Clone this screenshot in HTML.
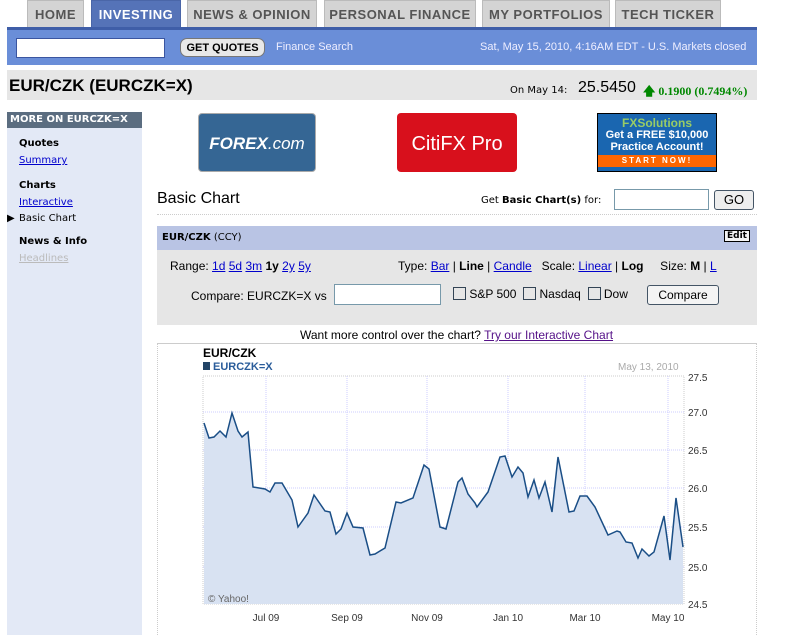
<!DOCTYPE html>
<html><head><style>
body{margin:0;width:810px;height:635px;background:#fff;font-family:"Liberation Sans",sans-serif;position:relative;overflow:hidden}
.a{position:absolute}
.tab{position:absolute;top:0;height:27px;background:#d4d4d4;border:1px solid #bbb;border-bottom:none;color:#555;font-weight:bold;font-size:13px;letter-spacing:0.5px;line-height:27px;text-align:center;box-sizing:border-box}
a{color:#00c;text-decoration:underline}
.v{font-family:"DejaVu Sans",sans-serif}
.sb div{position:absolute;left:19px;font-size:10px;white-space:nowrap}
</style></head><body>
<div class="tab" style="left:27px;width:57px">HOME</div>
<div class="tab" style="left:91px;width:90px;background:#5573b8;color:#fff;border-color:#4a66a8">INVESTING</div>
<div class="tab" style="left:187px;width:130px">NEWS &amp; OPINION</div>
<div class="tab" style="left:324px;width:152px">PERSONAL FINANCE</div>
<div class="tab" style="left:482px;width:128px">MY PORTFOLIOS</div>
<div class="tab" style="left:615px;width:106px">TECH TICKER</div>
<div class="a" style="left:7px;top:27px;width:750px;height:38px;background:#6a8ed8;border-top:3px solid #3f5ea8;box-sizing:border-box"></div>
<div class="a" style="left:16px;top:38px;width:149px;height:20px;background:#fff;border:1px solid #3a55a0;box-sizing:border-box"></div>
<div class="a" style="left:180px;top:38px;width:85px;height:19px;background:#e8e8e8;border:1px solid #777;border-radius:7px;font-size:11px;font-weight:bold;line-height:18px;text-align:center;box-sizing:border-box">GET QUOTES</div>
<div class="a" style="left:276px;top:41px;color:#eef;font-size:11px">Finance Search</div>
<div class="a" style="left:480px;top:41px;color:#eef;font-size:11px">Sat, May 15, 2010, 4:16AM EDT - U.S. Markets closed</div>
<div class="a" style="left:7px;top:70px;width:750px;height:30px;background:#e6e6e6"></div>
<div class="a" style="left:9px;top:76px;font-size:17px;font-weight:bold">EUR/CZK (EURCZK=X)</div>
<div class="a v" style="left:510px;top:85px;font-size:10px">On May 14:</div>
<div class="a" style="left:578px;top:79px;font-size:16px">25.5450</div>
<div class="a" style="left:643px;top:82px;font-size:12px;font-weight:bold;color:#080;font-family:'Liberation Serif',serif">&#129093; 0.1900 (0.7494%)</div>
<div class="a" style="left:7px;top:112px;width:135px;height:523px;background:#e3e9f6"></div>
<div class="a v" style="left:7px;top:112px;width:135px;height:16px;background:#5b6d80;color:#fff;font-size:10px;font-weight:bold;line-height:16px;padding-left:3px;box-sizing:border-box">MORE ON EURCZK=X</div>
<div class="sb v">
<div style="top:138px;font-weight:bold">Quotes</div>
<div style="top:155px"><a href="#">Summary</a></div>
<div style="top:180px;font-weight:bold">Charts</div>
<div style="top:197px"><a href="#">Interactive</a></div>
<div style="top:213px"><span style="position:absolute;left:-12px">&#9654;</span>Basic Chart</div>
<div style="top:236px;font-weight:bold">News &amp; Info</div>
<div style="top:253px;color:#bbb;text-decoration:underline">Headlines</div>
</div>
<div class="a" style="left:198px;top:113px;width:118px;height:59px;background:#356694;border:1px solid #aaa;border-radius:4px;color:#fff;font-style:italic;font-weight:bold;font-size:17px;line-height:59px;text-align:center;box-sizing:border-box">FOREX<span style="font-weight:normal">.com</span></div>
<div class="a" style="left:397px;top:113px;width:120px;height:59px;background:#d8101c;border-radius:4px;color:#fff;font-size:20px;line-height:62px;text-align:center">CitiFX Pro</div>
<div class="a" style="left:597px;top:113px;width:120px;height:59px;background:#1a66b0;border:1px solid #000;box-sizing:border-box;color:#fff;font-weight:bold;font-size:11px;text-align:center;line-height:12px">
<div style="color:#9c6;font-size:12px;margin-top:3px">FXSolutions</div>Get a FREE $10,000<br>Practice Account!
<div style="background:#f60;font-size:8px;margin-top:2px;letter-spacing:2px">START NOW!</div></div>
<div class="a" style="left:157px;top:190px;font-size:16px">Basic Chart</div>
<div class="a v" style="left:481px;top:195px;font-size:10px">Get <b>Basic Chart(s)</b> for:</div>
<div class="a" style="left:614px;top:189px;width:95px;height:21px;border:1px solid #79a;box-sizing:border-box"></div>
<div class="a" style="left:714px;top:190px;width:40px;height:20px;border:1px solid #456;border-radius:3px;background:#eee;box-sizing:border-box;text-align:center;font-size:13px;line-height:18px">GO</div>
<div class="a" style="left:157px;top:214px;width:600px;border-top:1px dotted #ccc"></div>
<div class="a" style="left:157px;top:226px;width:600px;height:24px;background:#b9c4e4"></div>
<div class="a v" style="left:162px;top:232px;font-size:10px"><b>EUR/CZK</b> (CCY)</div>
<div class="a v" style="left:724px;top:230px;font-size:9px;font-weight:bold;border:1px solid #000;background:#f4f4f4;padding:0 2px">Edit</div>
<div class="a" style="left:157px;top:250px;width:600px;height:75px;background:#e6e6e6"></div>
<div class="a" style="left:170px;top:259px;font-size:12px">Range: <a href="#">1d</a> <a href="#">5d</a> <a href="#">3m</a> <b>1y</b> <a href="#">2y</a> <a href="#">5y</a></div>
<div class="a" style="left:398px;top:259px;font-size:12px">Type: <a href="#">Bar</a> | <b>Line</b> | <a href="#">Candle</a> &nbsp; Scale: <a href="#">Linear</a> | <b>Log</b> &nbsp; &nbsp; Size: <b>M</b> | <a href="#">L</a></div>
<div class="a" style="left:191px;top:289px;font-size:12px">Compare: EURCZK=X vs</div>
<div class="a" style="left:334px;top:284px;width:107px;height:21px;background:#fff;border:1px solid #79a;box-sizing:border-box"></div>
<div class="a" style="left:453px;top:287px;font-size:12px"><span style="display:inline-block;width:11px;height:11px;border:1px solid #345;vertical-align:-2px"></span> S&amp;P 500 &nbsp;<span style="display:inline-block;width:11px;height:11px;border:1px solid #345;vertical-align:-2px"></span> Nasdaq &nbsp;<span style="display:inline-block;width:11px;height:11px;border:1px solid #345;vertical-align:-2px"></span> Dow</div>
<div class="a" style="left:647px;top:285px;width:72px;height:20px;border:1px solid #456;border-radius:3px;background:#f4f4f4;box-sizing:border-box;font-size:12px;text-align:center;line-height:18px">Compare</div>
<div class="a" style="left:300px;top:328px;font-size:12px">Want more control over the chart? <a href="#" style="color:#518">Try our Interactive Chart</a></div>
<div class="a" style="left:157px;top:343px;width:600px;height:292px;border-left:1px dotted #ccc;border-right:1px dotted #ccc;border-top:1px solid #ccc;box-sizing:border-box"></div>
<svg class="a" style="left:0;top:0" width="810" height="635">
<g font-family="Liberation Sans,sans-serif">
<text x="203" y="357" font-size="12" font-weight="bold">EUR/CZK</text>
<rect x="203" y="362" width="7" height="8" fill="#246"/>
<text x="213" y="370" font-size="11" font-weight="bold" fill="#2a5c9a">EURCZK=X</text>
<text x="618" y="370" font-size="10" fill="#aaa">May 13, 2010</text>
<rect x="203" y="376" width="481" height="228" fill="none" stroke="#ccc" stroke-dasharray="1,1"/>
<g stroke="#ccf" stroke-dasharray="1,1"><line x1="203" y1="412" x2="684" y2="412"/><line x1="203" y1="450" x2="684" y2="450"/><line x1="203" y1="488" x2="684" y2="488"/><line x1="203" y1="527" x2="684" y2="527"/><line x1="203" y1="567" x2="684" y2="567"/>
<line x1="266" y1="376" x2="266" y2="604"/><line x1="347" y1="376" x2="347" y2="604"/><line x1="427" y1="376" x2="427" y2="604"/><line x1="508" y1="376" x2="508" y2="604"/><line x1="585" y1="376" x2="585" y2="604"/><line x1="668" y1="376" x2="668" y2="604"/></g>
<path d="M204,423L209,438L214,437L220,431L226,437L232,413L238,431L242,437L248,432L253,487L265,489L270,492L275,483L282,483L292,500L298,527L308,513L314,495L325,511L330,512L336,534L341,529L347,513L353,527L363,528L370,555L375,554L385,548L396,502L401,503L413,498L424,465L429,469L440,527L446,529L458,482L462,478L468,494L475,503L477,507L488,492L500,457L505,456L512,477L518,467L523,473L528,497L534,480L539,498L545,482L552,512L558,457L569,512L574,511L580,496L587,496L595,507L608,535L617,531L620,532L626,542L632,543L638,558L642,549L649,556L654,552L664,516L670,560L676,498L683,547L683,604L204,604Z" fill="#d8e2f2" stroke="none"/>
<path d="M204,423L209,438L214,437L220,431L226,437L232,413L238,431L242,437L248,432L253,487L265,489L270,492L275,483L282,483L292,500L298,527L308,513L314,495L325,511L330,512L336,534L341,529L347,513L353,527L363,528L370,555L375,554L385,548L396,502L401,503L413,498L424,465L429,469L440,527L446,529L458,482L462,478L468,494L475,503L477,507L488,492L500,457L505,456L512,477L518,467L523,473L528,497L534,480L539,498L545,482L552,512L558,457L569,512L574,511L580,496L587,496L595,507L608,535L617,531L620,532L626,542L632,543L638,558L642,549L649,556L654,552L664,516L670,560L676,498L683,547" fill="none" stroke="#1a4e86" stroke-width="1.5"/>
<text x="208" y="602" font-size="10" fill="#666">© Yahoo!</text>
<g font-size="10" fill="#333"><text x="688" y="381">27.5</text><text x="688" y="416">27.0</text><text x="688" y="454">26.5</text><text x="688" y="492">26.0</text><text x="688" y="531">25.5</text><text x="688" y="571">25.0</text><text x="688" y="608">24.5</text>
<text x="266" y="621" text-anchor="middle">Jul 09</text><text x="347" y="621" text-anchor="middle">Sep 09</text><text x="427" y="621" text-anchor="middle">Nov 09</text><text x="508" y="621" text-anchor="middle">Jan 10</text><text x="585" y="621" text-anchor="middle">Mar 10</text><text x="668" y="621" text-anchor="middle">May 10</text></g>
</g></svg>
</body></html>
